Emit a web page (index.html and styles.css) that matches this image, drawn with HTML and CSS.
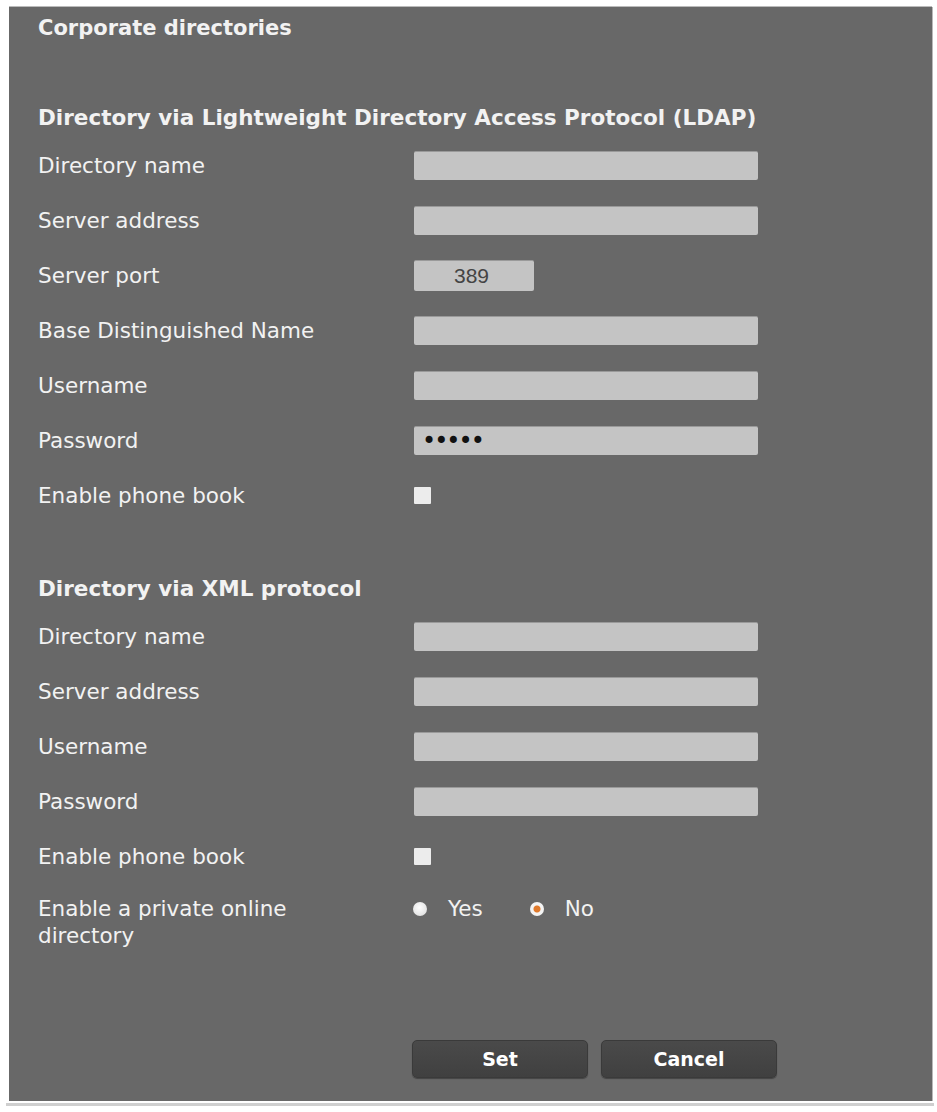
FILE: index.html
```html
<!DOCTYPE html>
<html lang="en">
  <head>
    <meta charset="UTF-8" />
    <meta name="viewport" content="width=device-width, initial-scale=1.0" />
    <title>Corporate directories</title>
    <link rel="stylesheet" href="styles.css">
  </head>
  <body>
    <form class="panel">
      <h1>Corporate directories</h1>

      <h2 class="ldap-title">Directory via Lightweight Directory Access Protocol (LDAP)</h2>
      <div class="row">
        <label>Directory name</label>
        <input type="text" class="field" />
      </div>
      <div class="row">
        <label>Server address</label>
        <input type="text" class="field" />
      </div>
      <div class="row">
        <label>Server port</label>
        <input type="text" class="field port" value="389" />
      </div>
      <div class="row">
        <label>Base Distinguished Name</label>
        <input type="text" class="field" />
      </div>
      <div class="row">
        <label>Username</label>
        <input type="text" class="field" />
      </div>
      <div class="row">
        <label>Password</label>
        <input type="password" class="field" value="12345" />
      </div>
      <div class="row">
        <label>Enable phone book</label>
        <input type="checkbox" class="check" />
      </div>

      <h2 class="xml-title">Directory via XML protocol</h2>
      <div class="row">
        <label>Directory name</label>
        <input type="text" class="field" />
      </div>
      <div class="row">
        <label>Server address</label>
        <input type="text" class="field" />
      </div>
      <div class="row">
        <label>Username</label>
        <input type="text" class="field" />
      </div>
      <div class="row">
        <label>Password</label>
        <input type="password" class="field" />
      </div>
      <div class="row">
        <label>Enable phone book</label>
        <input type="checkbox" class="check" />
      </div>
      <div class="row row-tall">
        <label>Enable a private online<br />directory</label>
        <div class="radios">
          <label class="opt"><input type="radio" name="private" class="radio" /> Yes</label>
          <label class="opt"><input type="radio" name="private" class="radio" checked /> No</label>
        </div>
      </div>

      <div class="buttons">
        <button type="button" class="btn">Set</button>
        <button type="button" class="btn">Cancel</button>
      </div>
    </form>
    <div class="bottom-line"></div>
  </body>
</html>
```

FILE: styles.css
```css
body {
  margin: 0;
  padding: 7px 0 0 9px;
  background: #fff;
  font-family: "DejaVu Sans", Verdana, sans-serif;
}
.panel {
  width: 923px;
  box-sizing: border-box;
  background: #686868;
  padding: 8px 29px 23px;
  color: #f2f2f2;
  box-shadow: 1px 0 0 #b8b8b8, 0 -1px 0 #bbb;
}
h1,
h2 {
  margin: 0;
  font-size: 21.5px;
  line-height: 26px;
  font-weight: bold;
}
h1 {
  font-size: 21px;
}
.ldap-title {
  margin: 64px 0 7px;
}
.xml-title {
  margin: 53px 0 7px;
}
.row {
  display: flex;
  align-items: center;
  height: 55px;
}
.row > label {
  width: 376px;
  flex: none;
  font-size: 21.5px;
  line-height: 27px;
}
.row-tall {
  align-items: flex-start;
  height: auto;
  padding-top: 11px;
}
.field {
  width: 344px;
  height: 29px;
  box-sizing: border-box;
  margin: 0;
  padding: 0 8px;
  border: none;
  border-top: 1px solid #9a9a9a;
  border-radius: 2px;
  background: #c4c4c4;
  font-family: "Liberation Sans", Arial, sans-serif;
  font-size: 21px;
  color: #444;
}
.port {
  width: 120px;
  height: 31px;
  padding-left: 40px;
}
input[type="password"].field {
  font-family: "DejaVu Sans", sans-serif;
  font-size: 24px;
  letter-spacing: -2px;
  color: #111;
}
.check {
  appearance: none;
  margin: 0;
  width: 17px;
  height: 17px;
  background: #ececec;
  border-radius: 1px;
}
.radios {
  display: flex;
  gap: 48px;
}
.opt {
  display: flex;
  align-items: center;
  gap: 21px;
  font-size: 21.5px;
  line-height: 27px;
}
.radio {
  appearance: none;
  margin: 0 0 0 -1px;
  width: 14px;
  height: 14px;
  border-radius: 50%;
  background: radial-gradient(circle at 45% 40%, #fff, #d8d8d8);
}
.radio:checked {
  background: radial-gradient(circle, #e07a2c 0 3px, #f4f4f4 4px);
}
.buttons {
  display: flex;
  gap: 13px;
  margin: 91px 0 0 374px;
}
.btn {
  width: 176px;
  height: 38px;
  border: 1px solid #3a3a3a;
  border-radius: 5px;
  background: linear-gradient(#4a4a4a, #404040);
  box-shadow: 0 1px 1px rgba(0, 0, 0, 0.35);
  color: #fff;
  font-family: "DejaVu Sans", Verdana, sans-serif;
  font-size: 19px;
  font-weight: bold;
}
.bottom-line {
  width: 928px;
  height: 3px;
  margin-top: 2px;
  margin-left: -3px;
  background: #cfcfcf;
}
```
